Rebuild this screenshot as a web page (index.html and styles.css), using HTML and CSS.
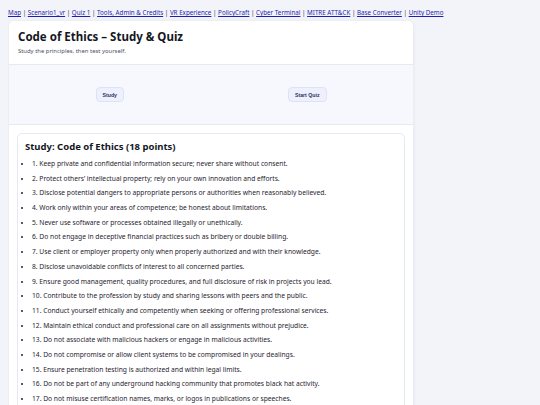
FILE: index.html
```html
<!DOCTYPE html>
<html lang="en">
<head>
    <meta charset="UTF-8">
    <meta name="viewport" content="width=device-width, initial-scale=1.0">
    <title>Code of Ethics – Study &amp; Quiz</title>
    <link rel="stylesheet" href="styles.css">
</head>
<body>
    <nav class="top-nav">
        <a href="#">Map</a> | <a href="#">Scenario1_vr</a> | <a href="#">Quiz 1</a> | <a href="#">Tools, Admin &amp; Credits</a> | <a href="#">VR Experience</a> | <a href="#">PolicyCraft</a> | <a href="#">Cyber Terminal</a> | <a href="#">MITRE ATT&amp;CK</a> | <a href="#">Base Converter</a> | <a href="#">Unity Demo</a>
    </nav>

    <main class="app">
        <header class="app-header">
            <h1>Code of Ethics – Study &amp; Quiz</h1>
            <p class="subtitle">Study the principles, then test yourself.</p>
        </header>

        <div class="mode-bar">
            <div class="mode-cell"><button class="btn" id="study-btn">Study</button></div>
            <div class="mode-cell"><button class="btn" id="quiz-btn">Start Quiz</button></div>
        </div>

        <div class="content">
            <section class="card">
                <h2 class="card-title">Study: Code of Ethics (18 points)</h2>
                <ul class="points">
                    <li>1. Keep private and confidential information secure; never share without consent.</li>
                    <li>2. Protect others’ intellectual property; rely on your own innovation and efforts.</li>
                    <li>3. Disclose potential dangers to appropriate persons or authorities when reasonably believed.</li>
                    <li>4. Work only within your areas of competence; be honest about limitations.</li>
                    <li>5. Never use software or processes obtained illegally or unethically.</li>
                    <li>6. Do not engage in deceptive financial practices such as bribery or double billing.</li>
                    <li>7. Use client or employer property only when properly authorized and with their knowledge.</li>
                    <li>8. Disclose unavoidable conflicts of interest to all concerned parties.</li>
                    <li>9. Ensure good management, quality procedures, and full disclosure of risk in projects you lead.</li>
                    <li>10. Contribute to the profession by study and sharing lessons with peers and the public.</li>
                    <li>11. Conduct yourself ethically and competently when seeking or offering professional services.</li>
                    <li>12. Maintain ethical conduct and professional care on all assignments without prejudice.</li>
                    <li>13. Do not associate with malicious hackers or engage in malicious activities.</li>
                    <li>14. Do not compromise or allow client systems to be compromised in your dealings.</li>
                    <li>15. Ensure penetration testing is authorized and within legal limits.</li>
                    <li>16. Do not be part of any underground hacking community that promotes black hat activity.</li>
                    <li>17. Do not misuse certification names, marks, or logos in publications or speeches.</li>
                    <li>18. Comply with all applicable laws and regulations in every engagement.</li>
                </ul>
            </section>
        </div>
    </main>
</body>
</html>
```

FILE: styles.css
```css
:root {
    --bg: #f3f4fa;
    --card: #ffffff;
    --panel: #f7f8fe;
    --border: #e6e9f2;
    --text: #1f2330;
    --muted: #4b5060;
    --link: #1f1fae;
    --btn-bg: #eef1fd;
    --btn-border: #dde3f6;
    --btn-text: #2b3160;
}
* {
    box-sizing: border-box;
}
body {
    margin: 8px;
    background-color: var(--bg);
    color: var(--text);
    font-family: "Noto Sans", "Open Sans", sans-serif;
}

/* Top navigation */
.top-nav {
    font-size: 6.25px;
    line-height: 10px;
    color: #333;
    margin-bottom: 3px;
}
.top-nav a {
    color: var(--link);
}

/* Main app card */
.app {
    width: 404px;
    margin-left: 1px;
    background-color: var(--card);
    border-radius: 5px;
    box-shadow: 0 1px 4px rgba(30, 40, 80, 0.08);
    overflow: hidden;
}
.app-header {
    padding: 8px 9px 9px;
    border-bottom: 1px solid var(--border);
}
h1 {
    margin: 0;
    font-size: 11.5px;
    line-height: 15px;
    font-weight: 700;
    color: #15171f;
}
.subtitle {
    margin: 4px 0 0;
    font-size: 5.9px;
    line-height: 7px;
    color: var(--muted);
}

/* Study / quiz switch */
.mode-bar {
    display: grid;
    grid-template-columns: 1fr 1fr;
    padding: 22px 7px 22px 2px;
    background-color: var(--panel);
    border-bottom: 1px solid var(--border);
}
.mode-cell {
    display: flex;
    justify-content: center;
}
.btn {
    height: 15px;
    padding: 0 6px;
    font-family: "Liberation Sans", Arial, sans-serif;
    font-size: 5.2px;
    font-weight: bold;
    color: var(--btn-text);
    background-color: var(--btn-bg);
    border: 1px solid var(--btn-border);
    border-radius: 4px;
    cursor: pointer;
}

/* Study content */
.content {
    padding: 8px;
}
.card {
    border: 1px solid var(--border);
    border-radius: 5px;
    padding: 6px 7px;
}
.card-title {
    margin: 0 0 6px;
    font-size: 9.5px;
    line-height: 14px;
    font-weight: 700;
    color: #15171f;
}
.points {
    margin: 0;
    padding-left: 7px;
    font-size: 6.7px;
    line-height: 8px;
}
.points li {
    margin-bottom: 6.7px;
}
```
